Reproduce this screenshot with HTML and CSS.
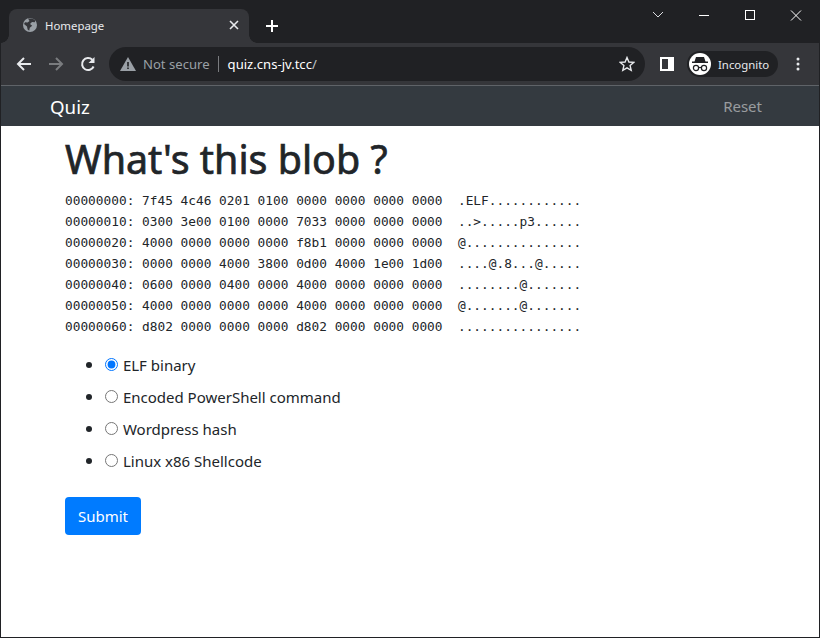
FILE: index.html
```html
<!DOCTYPE html>
<html lang="en">
<head>
<meta charset="utf-8">
<title>Homepage</title>
<link rel="stylesheet" href="styles.css">
</head>
<body>
<div class="window">
  <header class="tabstrip">
    <div class="tab">
      <svg class="globe" viewBox="0 0 16 16" width="16" height="16"><circle cx="8" cy="8" r="7" fill="#9aa0a6"/><path d="M6 1.6 7.5 4 5.6 5.6 3 5.2 2 7l3 2.4.6 3 1.6 1.4.6-3 2.4-2L8 7l2-2 2.8.2 .4-1.6L10.5 1.6z" fill="#35363a"/></svg>
      <span class="tab-title">Homepage</span>
      <svg class="tab-close" viewBox="0 0 10 10" width="10" height="10"><path d="M1 1l8 8M9 1l-8 8" stroke="#e8eaed" stroke-width="1.6"/></svg>
    </div>
    <svg class="newtab" viewBox="0 0 12 12" width="12" height="12"><path d="M6 0v12M0 6h12" stroke="#fff" stroke-width="2"/></svg>
    <div class="winctl">
      <svg width="46" height="16" viewBox="0 0 46 16"><path d="M18 4l5 5 5-5" fill="none" stroke="#dadce0"/></svg>
      <svg width="46" height="16" viewBox="0 0 46 16"><path d="M18 7.500h10" stroke="#fff"/></svg>
      <svg width="46" height="16" viewBox="0 0 46 16"><rect x="18.500" y="2.500" width="9" height="9" fill="none" stroke="#fff"/></svg>
      <svg width="46" height="16" viewBox="0 0 46 16"><path d="M18 2.500l10 10M28 2.500l-10 10" fill="none" stroke="#fff"/></svg>
    </div>
  </header>
  <div class="toolbar">
    <svg class="tool" width="16" height="16" viewBox="0 0 16 16"><path d="M15 8H2M8 2 2 8l6 6" fill="none" stroke="#e8eaed" stroke-width="2"/></svg>
    <svg class="tool" width="16" height="16" viewBox="0 0 16 16"><path d="M1 8h13M8 2l6 6-6 6" fill="none" stroke="#7a7c7f" stroke-width="2"/></svg>
    <svg class="tool" width="16" height="16" viewBox="0 0 16 16"><path d="M13.600 10.500A6 6 0 1 1 12.300 3.800" fill="none" stroke="#e8eaed" stroke-width="2"/><path d="M14.500 1v6h-6z" fill="#e8eaed"/></svg>
    <div class="omnibox">
      <svg width="16" height="14" viewBox="0 0 16 14"><path d="M8 0 16 14H0z" fill="#9aa0a6"/><path d="M7.200 5h1.600v4.500H7.200zM7.200 10.400h1.600V12H7.200z" fill="#202124"/></svg>
      <span class="not-secure">Not secure</span>
      <span class="omni-sep"></span>
      <span class="url"><b>quiz.cns-jv.tcc</b>/</span>
      <svg class="star" width="16" height="16" viewBox="0 0 16 16"><path d="M8 1.500 9.900 6l4.800.4-3.600 3.200 1.100 4.700L8 11.800l-4.200 2.500 1.100-4.700L1.300 6.400 6.100 6z" fill="none" stroke="#e8eaed" stroke-width="1.400"/></svg>
    </div>
    <svg class="sidepanel" width="14" height="14" viewBox="0 0 14 14"><path d="M0 0h14v14H0zM2 2v10h6V2z" fill="#fff" fill-rule="evenodd"/></svg>
    <div class="incognito">
      <span class="incog-badge"><svg width="18" height="16" viewBox="0 0 18 16"><path d="M5 1h8l1.500 4.500H17V7H1V5.500h2.500z" fill="#202124"/><circle cx="5" cy="12" r="2.600" fill="none" stroke="#202124" stroke-width="1.200"/><circle cx="13" cy="12" r="2.600" fill="none" stroke="#202124" stroke-width="1.200"/><path d="M7.500 11.500h3" stroke="#202124" stroke-width="1.200"/></svg></span>
      <span>Incognito</span>
    </div>
    <svg class="menu" width="4" height="14" viewBox="0 0 4 14"><circle cx="2" cy="2" r="1.500" fill="#e8eaed"/><circle cx="2" cy="7" r="1.500" fill="#e8eaed"/><circle cx="2" cy="12" r="1.500" fill="#e8eaed"/></svg>
  </div>
  <nav class="navbar">
    <a class="brand">Quiz</a>
    <a class="reset">Reset</a>
  </nav>
  <main class="content">
    <h1>What's this blob ?</h1>
    <pre class="hexdump">00000000: 7f45 4c46 0201 0100 0000 0000 0000 0000  .ELF............
00000010: 0300 3e00 0100 0000 7033 0000 0000 0000  ..&gt;.....p3......
00000020: 4000 0000 0000 0000 f8b1 0000 0000 0000  @...............
00000030: 0000 0000 4000 3800 0d00 4000 1e00 1d00  ....@.8...@.....
00000040: 0600 0000 0400 0000 4000 0000 0000 0000  ........@.......
00000050: 4000 0000 0000 0000 4000 0000 0000 0000  @.......@.......
00000060: d802 0000 0000 0000 d802 0000 0000 0000  ................</pre>
    <form>
      <ul class="answers">
        <li><label><input type="radio" name="a" checked> ELF binary</label></li>
        <li><label><input type="radio" name="a"> Encoded PowerShell command</label></li>
        <li><label><input type="radio" name="a"> Wordpress hash</label></li>
        <li><label><input type="radio" name="a"> Linux x86 Shellcode</label></li>
      </ul>
      <button type="button" class="submit">Submit</button>
    </form>
  </main>
</div>
</body>
</html>
```
FILE: styles.css
```css
html, body { margin: 0; height: 100%; }
body { font-family: "Noto Sans", "Open Sans", sans-serif; background: #fff; }
.window { height: 638px; box-sizing: border-box; border: 1px solid #202124; border-top: 0; display: flex; flex-direction: column; overflow: hidden; }
.tabstrip { height: 43px; background: #202124; display: flex; align-items: flex-end; padding-left: 8px; box-sizing: border-box; flex: none; }
.tab { position: relative; width: 240px; height: 34px; background: #35363a; border-radius: 8px 8px 0 0; display: flex; align-items: center; padding: 0 10px 2px 13px; box-sizing: border-box; color: #e8eaed; font-size: 11.400px; }
.tab::before, .tab::after { content: ""; position: absolute; bottom: 0; width: 8px; height: 8px; }
.tab::before { left: -8px; background: radial-gradient(circle at 0 0, transparent 7.500px, #35363a 8px); }
.tab::after { right: -8px; background: radial-gradient(circle at 100% 0, transparent 7.500px, #35363a 8px); }
.globe { margin-right: 7px; }
.tab-title { flex: 1; }
.newtab { margin: 0 0 11px 17px; }
.winctl { margin-left: auto; align-self: flex-start; padding-top: 8px; display: flex; width: 184px; }
.toolbar { height: 42px; background: #35363a; border-bottom: 1px solid #5f6368; display: flex; align-items: center; padding: 0 15px; flex: none; }
.tool { margin-right: 16px; flex: none; }
.omnibox { width: 536px; margin-left: -3px; height: 34px; border-radius: 17px; background: #202124; display: flex; align-items: center; padding: 0 10px 0 11px; box-sizing: border-box; font-size: 13.100px; color: #9aa0a6; flex: none; }
.not-secure { margin-left: 7px; }
.omni-sep { width: 1px; height: 16px; background: #7a7c7f; margin: 0 9px 0 8px; }
.url { color: #bdc1c6; flex: 1; }
.url b { font-weight: 400; color: #fff; }
.sidepanel { margin-left: 15px; flex: none; }
.incognito { margin-left: 13px; width: 91px; height: 26px; border-radius: 13px; background: #202124; display: flex; align-items: center; gap: 7px; color: #e8eaed; font-size: 11.400px; flex: none; }
.incog-badge { width: 22px; height: 22px; margin-left: 2px; border-radius: 50%; background: #fff; display: flex; align-items: center; justify-content: center; }
.menu { margin-left: 18px; flex: none; }
.navbar { height: 40px; background: #343a40; display: flex; align-items: center; justify-content: space-between; padding: 0 57px 0 49px; flex: none; }
.brand { font-size: 18.700px; color: #fff; }
.reset { font-size: 15px; color: rgba(255,255,255,.5); }
.content { padding: 10px 64px; color: #212529; font-size: 15px; }
h1 { margin: 0 0 8px; font-size: 39.400px; font-weight: 400; -webkit-text-stroke: .7px #212529; line-height: 46px; }
.hexdump { margin: 0 0 16px; font-family: "DejaVu Sans Mono", monospace; font-size: 12.800px; line-height: 21px; color: #212529; }
.answers { margin: 0 0 24px; padding-left: 40px; }
.answers li { height: 24px; margin-bottom: 8px; line-height: 24px; font-size: 17px; }
.answers label { font-size: 15px; }
.answers input { margin: 0 1px 0 0; width: 13px; height: 13px; accent-color: #0075ff; }
.submit { display: block; height: 38px; width: 76px; border: 0; border-radius: 4px; background: #007bff; color: #fff; font: inherit; font-size: 15px; }
```
